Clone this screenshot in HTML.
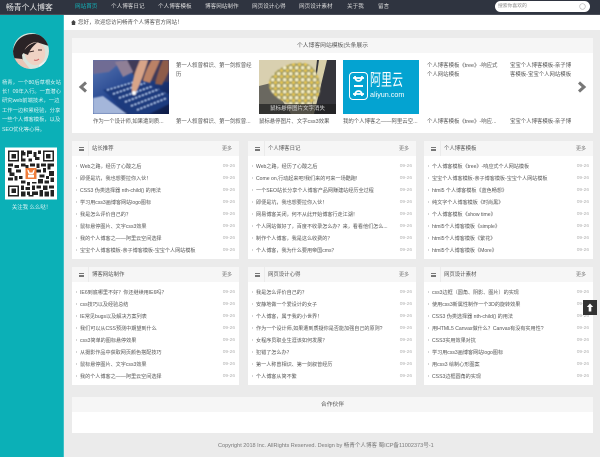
<!DOCTYPE html>
<html lang="zh"><head><meta charset="utf-8"><title>畅青个人博客</title>
<style>
*{margin:0;padding:0;box-sizing:border-box}
html,body{width:600px;height:457px;overflow:hidden}
body{position:relative;background:#ebebeb;font-family:"Liberation Sans","Noto Sans CJK SC",sans-serif;font-size:5.5px;color:#555}
#w{position:absolute;left:0;top:0;width:600px;height:457px;filter:blur(.35px)}
.a{position:absolute;white-space:nowrap}
#hd{left:0;top:0;width:600px;height:15px;background:#2f3440;border-bottom:1px solid #4a4e58}
.nav{top:0;height:15px;line-height:15.500px;color:#ddd;font-size:5.6px}
#side{left:0;top:15px;width:64px;height:442px;background:#0bb0b7;border-right:1px solid #3cc0c6}
.panel{position:absolute;background:#fff}
.ph{position:absolute;left:0;top:0;right:0;height:15px;background:#f6f6f6;line-height:17px}
.ph .t{position:absolute;left:20px;color:#555;font-size:5.4px}
.ph .m{position:absolute;right:7px;color:#777;font-size:5px}
.ph .d{position:absolute;left:16px;top:0;width:1px;height:15px;background:#ebebeb}
.ph .i{position:absolute;left:7px;top:5.500px;width:5px;height:4px;border-top:.7px solid #777;border-bottom:.7px solid #777}
.ph .i:after{content:"";position:absolute;left:0;right:0;top:1px;height:.7px;background:#777}
ul{position:absolute;left:0;right:0;top:19.500px;list-style:none}
li{position:relative;height:12px;line-height:12px;padding-left:8px;color:#555;font-size:5.1px;white-space:nowrap;overflow:hidden}
li:before{content:"";position:absolute;left:4px;top:4.500px;border-left:1.5px solid #aaa;border-top:1.2px solid transparent;border-bottom:1.2px solid transparent}
li b{position:absolute;right:4px;top:0;font-weight:normal;color:#b0b0b0;font-size:4.8px}
.cap{top:118.500px;line-height:6px;font-size:5.4px;color:#555}
.txt{top:62px;font-size:5.4px;line-height:9px;white-space:normal;width:78px;color:#555}
</style></head><body><div id="w">

<div class="a" id="hd"></div>
<div class="a" style="left:6px;top:0;height:15px;line-height:15.500px;font-size:7.8px;color:#e8e8e8">畅青个人博客</div>
<div class="a nav" style="left:75px;color:#12b3ba">网站首页</div>
<div class="a nav" style="left:111px">个人博客日记</div>
<div class="a nav" style="left:158px">个人博客模板</div>
<div class="a nav" style="left:205px">博客网站制作</div>
<div class="a nav" style="left:252px">网页设计心得</div>
<div class="a nav" style="left:299px">网页设计素材</div>
<div class="a nav" style="left:347px">关于我</div>
<div class="a nav" style="left:378px">留言</div>
<div class="a" style="left:495px;top:1px;width:95px;height:11px;border-radius:6px;background:#fff;line-height:12px;padding-left:3px;font-size:4.8px;color:#888">搜索你喜欢的
<svg style="position:absolute;right:4px;top:2px" width="7" height="7" viewBox="0 0 7 7"><circle cx="3.500" cy="3.500" r="2.800" fill="none" stroke="#bbb" stroke-width=".7"/></svg></div>

<div class="a" id="side"></div>
<svg class="a" style="left:13px;top:33px" width="36" height="36" viewBox="0 0 36 36">
<defs><clipPath id="c"><circle cx="18" cy="18" r="18"/></clipPath></defs>
<g clip-path="url(#c)"><rect width="36" height="36" fill="#d8e4dc"/>
<path d="M0 30V18C2 7 10 1 20 1c8 0 14 4 16 9v3L23 9 15 13 9 22l1 8z" fill="#2a2326"/>
<path d="M12 16c4-6 10-8 14-6 5 2 7 7 6 13-1 6-6 10-11 9-6-1-11-9-9-16z" fill="#efd2c4"/>
<path d="M10 20c3-7 9-10 15-11-4 3-8 7-10 13z" fill="#2a2326"/>
<path d="M16 19l5-1M25 17l4 0" stroke="#3b2a2a" stroke-width="1.100"/>
<path d="M21 27q3 1 5-1" stroke="#c66" stroke-width="1" fill="none"/>
<path d="M0 25l9 1 8 10H0z" fill="#e9c7b8"/>
<path d="M26 32l10-7v11H26z" fill="#f0f0f0"/></g></svg>
<div class="a" style="left:2px;top:78.500px;width:59px;white-space:normal;line-height:9.400px;font-size:5.3px;color:#d9f3f4">杨青，一个80后草根女站长！09年入行。一直潜心研究web前端技术，一边工作一边积累经验，分享一些个人博客模板，以及SEO优化等心得。</div>
<svg class="a" style="left:5px;top:147px" width="52" height="53" viewBox="0 0 33 33" shape-rendering="crispEdges">
<rect width="33" height="33" fill="#fff"/>
<path fill="#222" d="M2 2h7v7H2zM3 3v5h5V3zM4 4h3v3H4zM24 2h7v7h-7zM25 3v5h5V3zM26 4h3v3h-3zM2 24h7v7H2zM3 25v5h5v-5zM4 26h3v3H4z" fill-rule="evenodd"/>
<path fill="#222" d="M10 2h2v1h1v2h-2v2h2v2h-3zM14 2h3v2h-2v2h-1zM18 3h2v3h2v2h-3V6h-1zM21 2h2v2h-2zM15 7h2v2h-2zM10 10h3v1h2v2h-2v-1h-3zM16 10h3v2h-3zM20 10h2v3h-2zM23 10h3v2h-3zM27 10h4v2h-2v2h-2zM2 10h3v2H2zM6 11h3v2H6zM2 13h2v3h2v2H3v-2H2zM7 14h3v2H7zM20 14h3v2h-3zM24 13h2v3h-2zM28 15h3v3h-3zM2 19h3v2H2zM6 18h2v3H6zM9 18h2v2H9zM22 17h3v2h-3zM26 18h2v2h-2zM29 19h2v3h-2zM10 21h3v2h-3zM14 22h2v2h-2zM17 22h3v1h-3zM21 20h3v3h-3zM25 21h3v2h-3zM10 24h2v3h-2zM13 25h3v2h-3zM17 24h2v3h-2zM20 24h3v2h-3zM24 24h3v3h-3zM28 24h3v2h-3zM10 28h3v3h-3zM14 28h2v2h-2zM17 28h4v2h-4zM22 27h2v4h-2zM25 28h3v3h-3zM29 27h2v4h-2zM15 30h3v1h-3z"/>
<rect x="13" y="13" width="7" height="7" fill="#f07c3a"/><path d="M14 14l1 3h3l1-3-1 .5-.7 1.500h-1.600l-.7-1.500zM14.500 17.500h4v1.500h-4z" fill="#fff"/></svg>
<div class="a" style="left:0;width:63px;text-align:center;top:205px;line-height:6px;font-size:5.4px;color:#d9f3f4">关注我 么么哒！</div>

<div class="a" style="left:64px;top:15px;width:536px;height:15px;background:#fff"></div>
<svg class="a" style="left:71px;top:20px" width="5" height="5" viewBox="0 0 5 5"><path d="M2.500 0L5 2.400H4.200V5H.8V2.400H0z" fill="#444"/></svg>
<div class="a" style="left:78px;top:15px;line-height:16.500px;font-size:5.5px;color:#555">您好，欢迎您访问畅青个人博客官方网站！</div>

<!-- carousel -->
<div class="panel" style="left:72px;top:38px;width:521px;height:95px"><div class="ph" style="text-align:center;color:#555;font-size:5.8px">个人博客网站模板|头条展示</div></div>
<svg class="a" style="left:78px;top:81px" width="10" height="12" viewBox="0 0 10 12"><path d="M8 1.500L3 6l5 4.500" fill="none" stroke="#777" stroke-width="3"/></svg>
<svg class="a" style="left:577px;top:81px" width="10" height="12" viewBox="0 0 10 12"><path d="M2 1.500L7 6l-5 4.500" fill="none" stroke="#777" stroke-width="3"/></svg>

<svg class="a" style="left:93px;top:60px" width="76" height="54" viewBox="0 0 76 54">
<defs><linearGradient id="k" x1="0" y1="0" x2="1" y2="1"><stop offset="0" stop-color="#5a78b4"/><stop offset=".5" stop-color="#21428c"/><stop offset="1" stop-color="#0d1a44"/></linearGradient>
<filter id="b1"><feGaussianBlur stdDeviation=".8"/></filter></defs>
<rect width="76" height="54" fill="url(#k)"/>
<g filter="url(#b1)">
<path d="M30 0h46v22L44 20z" fill="#3f3a58"/>
<path d="M0 0h30L16 12 0 14z" fill="#6f6c94"/>
<path d="M22 2l12-2 6 12-10 5z" fill="#8f7f96"/>
<path d="M0 38l10-2 24 18H0z" fill="#a4b6da"/>
<path d="M10 30L44 20 76 34v10L56 54H36z" fill="#1c3a7e"/>
<path d="M14 30l30-9M20 34l32-11M26 38l34-12M32 42l34-13M38 46l34-13M44 50l30-12" stroke="#a8c4ee" stroke-width="1.500" stroke-dasharray="2.200 1.400"/>
<path d="M39 32c-1-9 3-20 8-32h8c-3 10-7 22-12 32z" fill="#d8a488"/>
<path d="M50 21c2-8 5-15 9-21h8c-3 8-7 15-10 23z" fill="#bb8266"/>
<path d="M62 24c2-8 5-17 8-24h6v11l-7 14z" fill="#8e5c48"/>
<circle cx="41" cy="33" r="2" fill="#fff"/></g>
</svg>
<div class="a txt" style="left:176px">第一人叙曾相识、第一剑叙曾经历</div>

<svg class="a" style="left:259px;top:60px" width="77" height="54" viewBox="0 0 77 54">
<defs><filter id="b2"><feGaussianBlur stdDeviation=".9"/></filter><pattern id="f" width="6" height="6" patternUnits="userSpaceOnUse"><rect width="6" height="6" fill="#a39c62"/><circle cx="1.700" cy="1.700" r="1.700" fill="#f6eec4"/><circle cx="4.500" cy="4.500" r="1.500" fill="#e6c650"/></pattern></defs>
<rect width="77" height="54" fill="#d9d0b0"/>
<path d="M0 26l12-3 20 31H0z" fill="#6a6860"/>
<path d="M58 0h19v54H52z" fill="#35353b"/>
<path d="M60 0L52 54h3L68 0z" fill="#d8cfa8"/>
<path d="M10 22C14 8 34 1 46 3c12 4 18 20 14 32-4 8-14 12-24 10-12-2-28-11-26-23z" fill="url(#f)" filter="url(#b2)"/>
<rect y="44" width="77" height="10" fill="#1f1f1f" opacity=".72"/>
</svg>
<div class="a" style="left:259px;top:104px;width:77px;height:10px;line-height:11px;text-align:center;color:#ddd;font-size:5.5px;overflow:hidden">鼠标悬停图片文字消失</div>

<div class="a" style="left:343px;top:60px;width:76px;height:54px;background:#04a3d1"></div>
<div class="a" style="left:349px;top:72px;width:19px;height:28px;border:1px solid #fff;border-radius:4px"></div>
<svg class="a" style="left:352px;top:75px" width="13" height="22" viewBox="0 0 13 22"><path d="M1 3h11M3 1c0 3 1 5 3.500 5S10 4 10 1M1 19h11M3 21c0-3 1-5 3.500-5s3.500 2 3.500 5" fill="none" stroke="#fff" stroke-width="1.700"/><path d="M2 11h9" stroke="#fff" stroke-width="2"/></svg>
<div class="a" style="left:370px;top:72px;line-height:12px;font-size:11px;color:#fff;transform:scaleY(1.500);transform-origin:0 0">阿里云</div>
<div class="a" style="left:370px;top:90px;line-height:10px;font-size:7.200px;color:#fff">aliyun.com</div>

<div class="a txt" style="left:427px;width:74px">个人博客模板《tree》-响应式个人网站模板</div>
<div class="a txt" style="left:510px;width:64px">宝宝个人博客模板-亲子博客模板-宝宝个人网站模板</div>

<div class="a cap" style="left:93px">作为一个设计师,如果遭到质...</div>
<div class="a cap" style="left:176px">第一人叙曾相识、第一剑叙曾...</div>
<div class="a cap" style="left:259px">鼠标悬停图片、文字css3效果</div>
<div class="a cap" style="left:343px">我的个人博客之——阿里云空...</div>
<div class="a cap" style="left:427px">个人博客模板《tree》-响应...</div>
<div class="a cap" style="left:510px">宝宝个人博客模板-亲子博</div>

<!-- row 1 -->
<div class="panel" style="left:72px;top:141px;width:167px;height:118px"><div class="ph"><i class="i"></i><i class="d"></i><span class="t">站长推荐</span><span class="m">更多</span></div>
<ul><li>Web之路，经历了心酸之后<b>09-26</b></li><li>即便是坑，我也想要拉你入伙！<b>09-26</b></li><li>CSS3 伪类选择器 nth-child() 的用法<b>09-26</b></li><li>学习用css3画博客网站logo图标<b>09-26</b></li><li>我是怎么评价自己的？<b>09-26</b></li><li>鼠标悬停图片、文字css3效果<b>09-26</b></li><li>我的个人博客之——阿里云空间选择<b>09-26</b></li><li>宝宝个人博客模板-亲子博客模板-宝宝个人网站模板<b>09-26</b></li></ul></div>

<div class="panel" style="left:248px;top:141px;width:168px;height:118px"><div class="ph"><i class="i"></i><i class="d"></i><span class="t">个人博客日记</span><span class="m">更多</span></div>
<ul><li>Web之路，经历了心酸之后<b>09-26</b></li><li>Come on,行动起来吧!我们来的可来一场酷跑!<b>09-26</b></li><li>一个SEO站长分享个人博客产品网赚建站经历全过程<b>09-26</b></li><li>即便是坑，我也想要拉你入伙！<b>09-26</b></li><li>网易博客关闭，何不从此开始博客行走江湖！<b>09-26</b></li><li>个人网站做好了，百度不收录怎么办？来，看看他们怎么...<b>09-26</b></li><li>制作个人博客，我是这么收费的？<b>09-26</b></li><li>个人博客，我为什么要用帝国cms？<b>09-26</b></li></ul></div>

<div class="panel" style="left:424px;top:141px;width:169px;height:118px"><div class="ph"><i class="i"></i><i class="d"></i><span class="t">个人博客模板</span><span class="m">更多</span></div>
<ul><li>个人博客模板《tree》-响应式个人网站模板<b>09-26</b></li><li>宝宝个人博客模板-亲子博客模板-宝宝个人网站模板<b>09-26</b></li><li>html5 个人博客模板《蓝色畅想》<b>09-26</b></li><li>纯文字个人博客模板《时尚黑》<b>09-26</b></li><li>个人博客模板《show time》<b>09-26</b></li><li>html5个人博客模板《simple》<b>09-26</b></li><li>html5个人博客模板《繁花》<b>09-26</b></li><li>html5个人博客模板《More》<b>09-26</b></li></ul></div>

<!-- row 2 -->
<div class="panel" style="left:72px;top:267px;width:167px;height:118px"><div class="ph"><i class="i"></i><i class="d"></i><span class="t">博客网站制作</span><span class="m">更多</span></div>
<ul><li>IE6到底哪里不好？你还继续用IE6吗？<b>09-26</b></li><li>css技巧以及经验总结<b>09-26</b></li><li>IE常见bugs以及解决方案列表<b>09-26</b></li><li>我们可以从CSS预测中期望到什么<b>09-26</b></li><li>css3简单的图标悬停效果<b>09-26</b></li><li>从摄影作品中获取网页颜色搭配技巧<b>09-26</b></li><li>鼠标悬停图片、文字css3效果<b>09-26</b></li><li>我的个人博客之——阿里云空间选择<b>09-26</b></li></ul></div>

<div class="panel" style="left:248px;top:267px;width:168px;height:118px"><div class="ph"><i class="i"></i><i class="d"></i><span class="t">网页设计心得</span><span class="m">更多</span></div>
<ul><li>我是怎么评价自己的？<b>09-26</b></li><li>安静地做一个爱设计的女子<b>09-26</b></li><li>个人博客，属于我的小世界！<b>09-26</b></li><li>作为一个设计师,如果遭到质疑你是否能加强自己的原则?<b>09-26</b></li><li>女程序员职业生涯该如何发展？<b>09-26</b></li><li>犯错了怎么办？<b>09-26</b></li><li>第一人称曾相识、第一剑叙曾经历<b>09-26</b></li><li>个人博客从简不繁<b>09-26</b></li></ul></div>

<div class="panel" style="left:424px;top:267px;width:169px;height:118px"><div class="ph"><i class="i"></i><i class="d"></i><span class="t">网页设计素材</span><span class="m">更多</span></div>
<ul><li>css3边框（圆角、阴影、图片）的实现<b>09-26</b></li><li>使用css3新属性制作一个3D的旋转效果<b>09-26</b></li><li>CSS3 伪类选择器 nth-child() 的用法<b>09-26</b></li><li>用HTML5 Canvas做什么？Canvas有没有实用性?<b>09-26</b></li><li>CSS3实用效果对抗<b>09-26</b></li><li>学习用css3画博客网站logo图标<b>09-26</b></li><li>用css3 绘制心形图案<b>09-26</b></li><li>CSS3边框圆角的实现<b>09-26</b></li></ul></div>

<div class="a" style="left:583px;top:300px;width:14px;height:15px;background:#333"></div>
<svg class="a" style="left:586px;top:303px" width="8" height="9" viewBox="0 0 8 9"><path d="M4 .5L7.200 4H5.300v4.500H2.700V4H.8z" fill="#fff"/></svg>

<!-- partners -->
<div class="panel" style="left:72px;top:397px;width:521px;height:36px"><div class="ph" style="text-align:center;color:#555;font-size:5.8px">合作伙伴</div></div>
<div class="a" style="left:218px;top:443px;line-height:7px;font-size:5.550px;color:#777">Copyright 2018 Inc. AllRights Reserved. Design by 畅青个人博客 蜀ICP备11002373号-1</div>
</div></body></html>
